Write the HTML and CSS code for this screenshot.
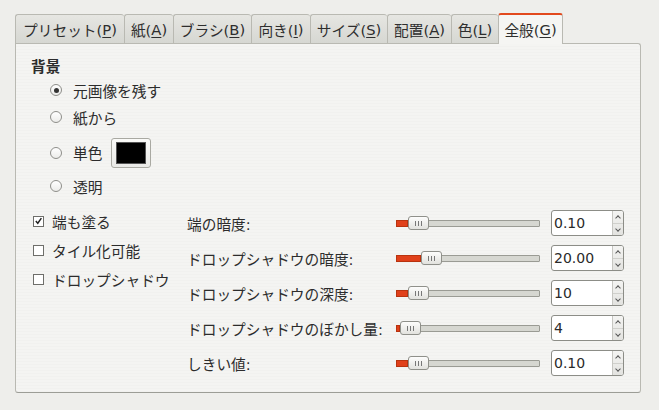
FILE: index.html
```html
<!DOCTYPE html>
<html lang="ja">
<head>
<meta charset="utf-8">
<link rel="stylesheet" href="styles.css">
</head>
<body>
<div class="tabs">
  <div class="tab w1">プリセット(<u>P</u>)</div>
  <div class="tab w2">紙(<u>A</u>)</div>
  <div class="tab w3">ブラシ(<u>B</u>)</div>
  <div class="tab w4">向き(<u>I</u>)</div>
  <div class="tab w5">サイズ(<u>S</u>)</div>
  <div class="tab w6">配置(<u>A</u>)</div>
  <div class="tab w7">色(<u>L</u>)</div>
  <div class="tab active w8">全般(<u>G</u>)</div>
</div>
<div class="panel">
  <div class="heading">背景</div>
  <div class="radios">
    <div class="radio-row r1"><span class="radio on"></span><span>元画像を残す</span></div>
    <div class="radio-row r2"><span class="radio"></span><span>紙から</span></div>
    <div class="radio-row r3"><span class="radio"></span><span>単色</span><span class="colorbtn"><span class="swatch"></span></span></div>
    <div class="radio-row r4"><span class="radio"></span><span>透明</span></div>
  </div>
  <div class="lower">
    <div class="checks">
      <div class="check-row"><span class="check on"><svg width="10" height="10" viewBox="0 0 10 10"><path d="M2 5 L4.2 7.5 L8.2 1.8" fill="none" stroke="#222" stroke-width="1.6"/></svg></span><span>端も塗る</span></div>
      <div class="check-row"><span class="check"></span><span>タイル化可能</span></div>
      <div class="check-row"><span class="check"></span><span>ドロップシャドウ</span></div>
    </div>
    <div class="sliders">
      <div class="srow">
        <span class="slabel">端の暗度:</span>
        <span class="scale"><span class="fill" style="width:12px"></span><span class="knob"><i></i><i></i><i></i></span></span>
        <span class="spin"><span class="val">0.10</span><span class="btns"><span class="up"></span><span class="dn"></span></span></span>
      </div>
      <div class="srow">
        <span class="slabel">ドロップシャドウの暗度:</span>
        <span class="scale"><span class="fill" style="width:25px"></span><span class="knob"><i></i><i></i><i></i></span></span>
        <span class="spin"><span class="val">20.00</span><span class="btns"><span class="up"></span><span class="dn"></span></span></span>
      </div>
      <div class="srow">
        <span class="slabel">ドロップシャドウの深度:</span>
        <span class="scale"><span class="fill" style="width:12px"></span><span class="knob"><i></i><i></i><i></i></span></span>
        <span class="spin"><span class="val">10</span><span class="btns"><span class="up"></span><span class="dn"></span></span></span>
      </div>
      <div class="srow">
        <span class="slabel">ドロップシャドウのぼかし量:</span>
        <span class="scale"><span class="fill" style="width:4px"></span><span class="knob"><i></i><i></i><i></i></span></span>
        <span class="spin"><span class="val">4</span><span class="btns"><span class="up"></span><span class="dn"></span></span></span>
      </div>
      <div class="srow">
        <span class="slabel">しきい値:</span>
        <span class="scale"><span class="fill" style="width:12px"></span><span class="knob"><i></i><i></i><i></i></span></span>
        <span class="spin"><span class="val">0.10</span><span class="btns"><span class="up"></span><span class="dn"></span></span></span>
      </div>
    </div>
  </div>
</div>
</body>
</html>
```
FILE: styles.css
```css
* { box-sizing: border-box; }
html, body { margin: 0; padding: 0; }
body {
  background: #eeeeeb;
  width: 659px;
  height: 410px;
  overflow: hidden;
  font-family: "DejaVu Sans", "Noto Sans CJK JP", sans-serif;
  font-size: 14.7px;
  color: #2c2c2c;
}
u { text-decoration: underline; text-underline-offset: 2px; }

.tabs {
  display: flex;
  align-items: flex-end;
  padding: 12px 0 0 15px;
  height: 43px;
}
.tab {
  height: 29px;
  display: flex;
  align-items: center;
  justify-content: center;
  border: 1px solid #b9b9b2;
  border-bottom: none;
  border-right: none;
  border-radius: 3px 3px 0 0;
  background: linear-gradient(#e6e6e2, #d6d7d2);
  color: #2e2e2e;
  font-size: 14.7px;
  white-space: nowrap;
}
.w1 { width: 109px; }
.w2 { width: 49px; }
.w3 { width: 78px; }
.w4 { width: 59px; }
.w5 { width: 77px; }
.w6 { width: 64px; }
.w7 { width: 47px; }
.w8 { width: 65px; }
.tab.active {
  height: 31px;
  background: #f5f5f3;
  border: 1px solid #b9b9b2;
  border-top: 2px solid #e2491d;
  border-bottom: none;
  padding-bottom: 1px;
  position: relative;
  z-index: 1;
  margin-bottom: -1px;
}

.panel {
  margin-left: 15px;
  width: 626px;
  height: 350px;
  border: 1px solid #b9b9b2;
  border-bottom: 1px solid #9c9d96;
  border-radius: 0 3px 3px 3px;
  background: repeating-linear-gradient(#f4f4f2 0px, #f4f4f2 2px, #f1f1ef 2px, #f1f1ef 3px);
  padding: 12px 0 0 15px;
}
.heading {
  font-weight: bold;
  height: 22px;
  line-height: 22px;
  font-size: 14.7px;
}
.radios { padding-left: 19px; }
.radio-row {
  display: flex;
  align-items: center;
  gap: 11px;
}
.r1 { height: 24px; }
.r2 { height: 30px; }
.r3 { height: 41px; }
.r4 { height: 26px; }
.radio {
  width: 12px;
  height: 12px;
  border: 1px solid #8e8e8a;
  border-radius: 50%;
  background: linear-gradient(#ffffff, #ececea);
  display: inline-flex;
  align-items: center;
  justify-content: center;
  flex: none;
}
.radio.on::after {
  content: "";
  width: 5px;
  height: 5px;
  border-radius: 50%;
  background: #333;
}
.colorbtn {
  width: 40px;
  height: 30px;
  border: 1px solid #a9a9a2;
  border-radius: 3px;
  background: linear-gradient(#fafaf8, #e9e9e6);
  display: inline-flex;
  align-items: center;
  justify-content: center;
  margin-left: -2px;
}
.swatch {
  width: 30px;
  height: 22px;
  background: #000;
  border: 1px solid #555;
}

.lower {
  display: flex;
  margin-top: 8px;
}
.checks {
  width: 156px;
  padding-left: 2px;
  display: flex;
  flex-direction: column;
  gap: 1px;
}
.check-row {
  height: 28px;
  display: flex;
  align-items: center;
  gap: 8px;
}
.check {
  width: 11px;
  height: 11px;
  border: 1px solid #6e6e6a;
  background: #fff;
  display: inline-flex;
  align-items: center;
  justify-content: center;
  flex: none;
}
.sliders {
  display: flex;
  flex-direction: column;
  gap: 9px;
  padding-top: 3px;
}
.srow {
  height: 26px;
  display: flex;
  align-items: center;
}
.slabel {
  width: 209px;
  white-space: nowrap;
}
.scale {
  width: 144px;
  height: 7px;
  border: 1px solid #9a9b94;
  border-radius: 1px;
  background: #d6d7d1;
  display: flex;
  align-items: center;
  position: relative;
}
.fill {
  height: 7px;
  margin-left: -1px;
  background: #e0401a;
  border: 1px solid #b8330f;
  flex: none;
}
.knob {
  width: 21px;
  height: 14px;
  border: 1px solid #8f908a;
  border-radius: 3px;
  background: linear-gradient(#fdfdfc, #e2e2de);
  display: flex;
  align-items: center;
  justify-content: center;
  gap: 2px;
  flex: none;
}
.knob i {
  width: 1px;
  height: 5px;
  background: #777;
}
.spin {
  margin-left: 11px;
  width: 73px;
  height: 26px;
  border: 1px solid #8c8d87;
  border-radius: 3px;
  background: #fff;
  display: flex;
  overflow: hidden;
}
.val {
  flex: 1;
  font-size: 14px;
  line-height: 24px;
  padding-left: 2px;
  color: #2a2a2a;
}
.btns {
  width: 11px;
  border-left: 1px solid #c7c7c2;
  background: linear-gradient(#f4f4f2, #e3e3e0);
  display: flex;
  flex-direction: column;
}
.up, .dn {
  flex: 1;
  position: relative;
}
.dn { border-top: 1px solid #d0d0cc; }
.up::after, .dn::after {
  content: "";
  position: absolute;
  left: 3px;
  width: 3px;
  height: 3px;
  border-left: 1px solid #555;
  border-top: 1px solid #555;
}
.up::after { top: 5px; transform: rotate(45deg); }
.dn::after { top: 3px; transform: rotate(225deg); }
```
